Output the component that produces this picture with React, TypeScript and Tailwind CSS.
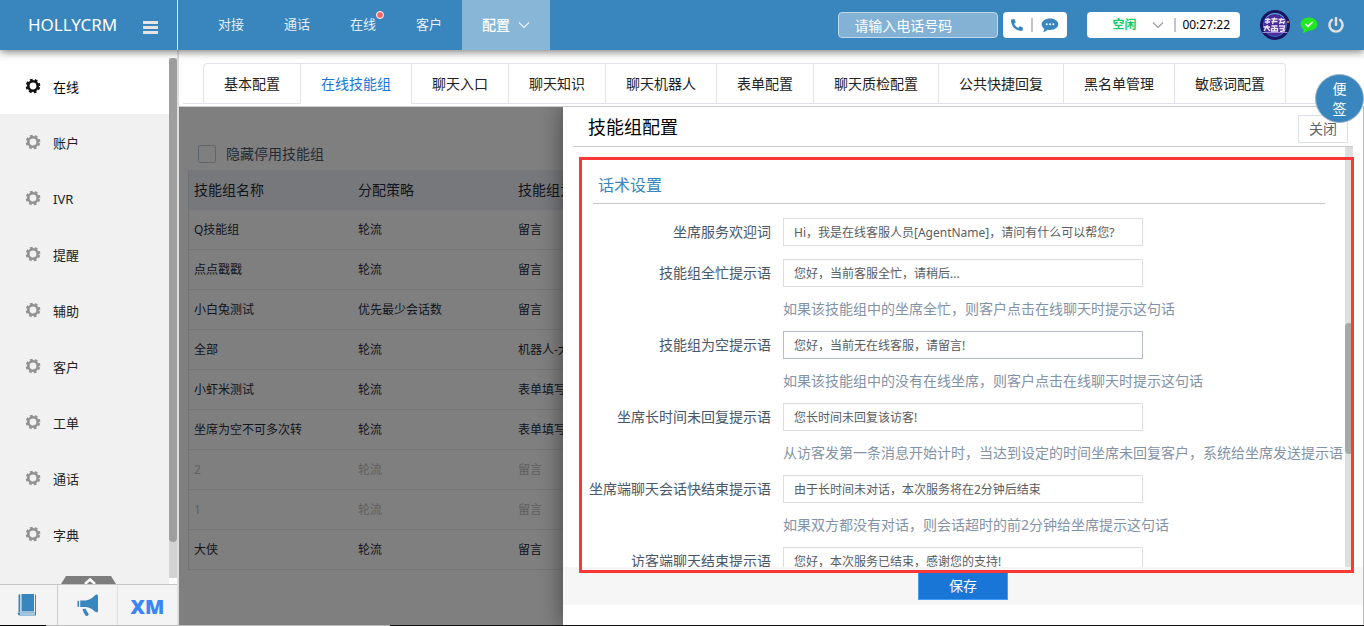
import clsx from "clsx";
import { FaPhone, FaPowerOff } from "react-icons/fa";

const navItems = [
  { name: "对接" },
  { name: "通话" },
  { name: "在线", dot: true },
  { name: "客户" },
];

const menuItems = [
  "在线",
  "账户",
  "IVR",
  "提醒",
  "辅助",
  "客户",
  "工单",
  "通话",
  "字典",
];

const tabs = [
  "基本配置",
  "在线技能组",
  "聊天入口",
  "聊天知识",
  "聊天机器人",
  "表单配置",
  "聊天质检配置",
  "公共快捷回复",
  "黑名单管理",
  "敏感词配置",
];

const groups = [
  { name: "Q技能组", strategy: "轮流", empty: "留言" },
  { name: "点点戳戳", strategy: "轮流", empty: "留言" },
  { name: "小白兔测试", strategy: "优先最少会话数", empty: "留言" },
  { name: "全部", strategy: "轮流", empty: "机器人-大白" },
  { name: "小虾米测试", strategy: "轮流", empty: "表单填写" },
  { name: "坐席为空不可多次转", strategy: "轮流", empty: "表单填写" },
  { name: "2", strategy: "轮流", empty: "留言", disabled: true },
  { name: "1", strategy: "轮流", empty: "留言", disabled: true },
  { name: "大侠", strategy: "轮流", empty: "留言" },
];

const fields = [
  {
    id: "welcome",
    label: "坐席服务欢迎词",
    value: "Hi，我是在线客服人员[AgentName]，请问有什么可以帮您?",
  },
  {
    id: "busy",
    label: "技能组全忙提示语",
    value: "您好，当前客服全忙，请稍后...",
    hint: "如果该技能组中的坐席全忙，则客户点击在线聊天时提示这句话",
  },
  {
    id: "empty",
    label: "技能组为空提示语",
    value: "您好，当前无在线客服，请留言!",
    hint: "如果该技能组中的没有在线坐席，则客户点击在线聊天时提示这句话",
    hovered: true,
  },
  {
    id: "noreply",
    label: "坐席长时间未回复提示语",
    value: "您长时间未回复该访客!",
    hint: "从访客发第一条消息开始计时，当达到设定的时间坐席未回复客户，系统给坐席发送提示语",
  },
  {
    id: "ending",
    label: "坐席端聊天会话快结束提示语",
    value: "由于长时间未对话，本次服务将在2分钟后结束",
    hint: "如果双方都没有对话，则会话超时的前2分钟给坐席提示这句话",
  },
  {
    id: "ended",
    label: "访客端聊天结束提示语",
    value: "您好，本次服务已结束，感谢您的支持!",
  },
];

const GearIcon = ({ className }: { className?: string }) => (
  <svg viewBox="-8 -8 16 16" className={className} fill="none" stroke="currentColor">
    <circle r="4.700" strokeWidth="2.600" />
    <circle r="6.300" strokeWidth="2" strokeDasharray="2.7 2.248" strokeDashoffset="-1.124" />
  </svg>
);

const ChevronIcon = ({ className }: { className?: string }) => (
  <svg viewBox="0 0 12 12" className={className} fill="none" stroke="currentColor" strokeWidth="1.100">
    <path d="M1 3.500l5 5 5-5" />
  </svg>
);

const BookIcon = () => (
  <svg viewBox="0 0 20 22" className="w-5 h-[22px]" fill="#3886bd">
    <path d="M4.500 0H17v17.500H4.500z" />
    <path d="M1.500 0.500H3.300v17.500H1.500z" />
    <path d="M18 0.500h1v21H3C1 21.500 0.500 20 0.800 18.600H18z" />
    <path d="M3 19.400h15v1.200H3z" fill="#f4f4f4" />
  </svg>
);

const MegaphoneIcon = () => (
  <svg viewBox="0 0 22 24" className="w-[22px] h-6" fill="#3886bd">
    <path d="M0.500 7.800h1.600v6H0.500z" />
    <path d="M3.200 7.400H9c3.500-.6 6.500-2.300 8.800-5C19 1 21 1.200 21 3v15c0 1.600-2 1.500-3.200.4C15.500 16 12.500 14.500 9 14H3.200z" />
    <path d="M5.500 16l3.200-.3c.6 2 1.700 3.300 2.800 5 .8 1.600-1.600 3.200-2.900 1.700-1.600-2-2.600-4-3.100-6.400z" />
  </svg>
);

const ChatIcon = () => (
  <svg viewBox="0 0 18 15" className="w-[18px] h-[15px]">
    <path
      d="M9 0.500c4.700 0 8.300 2.500 8.300 5.800S13.700 12 9 12c-.8 0-1.600 0-2.300-.2C5.500 13 4 13.800 1.900 13.900c1-.9 1.400-1.900 1.300-3.200C1.600 9.600.7 8 .7 6.300.7 3 4.300.5 9 .5z"
      fill="#3886bd"
    />
    <g fill="#fff">
      <circle cx="5.700" cy="6.200" r="1" />
      <circle cx="9" cy="6.200" r="1" />
      <circle cx="12.300" cy="6.200" r="1" />
    </g>
  </svg>
);

const CheckBubbleIcon = () => (
  <svg viewBox="0 0 18 17" className="w-[18px] h-[17px]">
    <path
      d="M9 0.500c4.800 0 8.500 2.900 8.500 6.600 0 3.800-3.700 6.700-8.500 6.700l-1.500-.1c-1.300 1.300-2.900 2.100-4.900 2.300.8-1 1.100-2.100.9-3.500C1.600 11.200.5 9.300.5 7.100.5 3.400 4.200.5 9 .5z"
      fill="#21e821"
    />
    <path d="M5.500 7l2.500 2.400L12.600 5" fill="none" stroke="#fff" strokeWidth="1.500" />
  </svg>
);

const Avatar = () => (
  <svg viewBox="0 0 30 30" className="size-[30px]">
    <circle cx="15" cy="15" r="15" fill="#1b1460" />
    <circle cx="15" cy="15" r="11.500" fill="#4a2c9c" stroke="#3c6fc4" />
    <path d="M6.500 7a12 12 0 0117 0" fill="none" stroke="#56a9d8" />
    <g stroke="#efe6fa" strokeWidth="1.300" fill="none">
      <path d="M5 9.500h5.500M8 8l-1 6M5 12h5M11.500 9h6M11.500 11.500h6M14.500 7.500l-2 6.500M18.500 9.500h6M21.500 8l-2 6M19.500 12.500h5M24.500 11l-1 3" />
      <path d="M3.500 17h6.500M7.500 15l-3.500 6M7 17.500l3 3.500M11.500 16h6M11.500 18.500h6v2.500h-6zM14.500 16v5M19 16h5.500l-1 5M19.500 18.500h4M20 21.500l5-1" />
    </g>
    <path d="M2.500 22.500h25" stroke="#a48ad6" />
    <circle cx="28" cy="12" r="1" fill="#ef8354" />
  </svg>
);

const Header = () => (
  <header className="relative z-20 flex h-[50px] shrink-0 items-center bg-[#3886bd] text-white shadow-[0_2px_8px_rgba(0,0,0,0.5)]">
    <div className="flex h-full w-[178px] shrink-0 items-center justify-between border-r border-[#dce9f3] pl-7 pr-[19px]">
      <span className="text-[17px]">HOLLYCRM</span>
      <button type="button" aria-label="菜单" className="mt-1 flex w-[15px] flex-col gap-[2px]">
        <span className="h-[3px] bg-[#e4e4e4]" />
        <span className="h-[3px] bg-[#e4e4e4]" />
        <span className="h-[3px] bg-[#e4e4e4]" />
      </button>
    </div>

    <nav className="ml-5 flex h-full text-[13px] text-[#e8eff5]">
      {navItems.map((item) => (
        <a key={item.name} href="#" className="flex items-center px-5">
          <span className="relative">
            {item.name}
            {item.dot && (
              <span className="absolute -right-2 -top-1 size-2 rounded-full border border-white bg-[#ff6060]" />
            )}
          </span>
        </a>
      ))}
      <button type="button" className="flex items-center gap-2 bg-[#88b6d7] px-5 text-sm font-medium text-white">
        配置
        <ChevronIcon className="size-3 text-[#eef4f9]" />
      </button>
    </nav>

    <div className="ml-auto flex items-center pr-5">
      <input
        type="tel"
        aria-label="电话号码"
        placeholder="请输入电话号码"
        className="h-[26px] w-40 rounded border border-[#c0d8ea] bg-[#84b2d4] px-[15px] text-sm text-white outline-none placeholder:text-white"
      />
      <div className="ml-[5px] flex h-[26px] w-16 items-center justify-center gap-2 rounded bg-white text-[#3886bd]">
        <button type="button" aria-label="拨号">
          <FaPhone className="size-3 -scale-x-100" />
        </button>
        <span className="h-3.5 w-[2px] bg-[#c4c4c4]" />
        <button type="button" aria-label="消息">
          <ChatIcon />
        </button>
      </div>
      <div className="ml-5 flex h-[26px] items-center rounded bg-white pl-[25px] pr-2.5">
        <div className="relative flex items-center">
          <select
            aria-label="坐席状态"
            className="w-14 appearance-none bg-transparent text-xs font-bold text-[#13ce66] outline-none"
          >
            <option>空闲</option>
          </select>
          <ChevronIcon className="pointer-events-none absolute right-1 size-3 text-[#999]" />
        </div>
        <span className="ml-1.5 h-3.5 w-[2px] bg-[#c4c4c4]" />
        <span className="ml-1.5 text-xs text-black">00:27:22</span>
      </div>
      <div className="ml-5 flex items-center gap-2.5">
        <Avatar />
        <CheckBubbleIcon />
        <button type="button" aria-label="退出">
          <FaPowerOff className="size-4 text-[#e0e0e0]" />
        </button>
      </div>
    </div>
  </header>
);

const Sidebar = () => (
  <aside className="flex w-[179px] shrink-0 flex-col border-r-2 border-[#dedede] bg-[#f1f1f1]">
    <div className="flex min-h-0 flex-1 bg-white pt-2">
      <nav className="flex-1 overflow-hidden bg-[#f1f1f1]">
        {menuItems.map((name, i) => (
          <a
            key={name}
            href="#"
            className={clsx(
              "flex h-14 items-center gap-3 pl-[25px] text-[13px]",
              i === 0 ? "bg-white text-black" : "text-[#222]"
            )}
          >
            <GearIcon className={clsx("size-4", i === 0 ? "text-[#111]" : "text-[#929292]")} />
            <span className="pt-1">{name}</span>
          </a>
        ))}
      </nav>
      <div className="mb-1.5 w-2 bg-[#d2d2d2]">
        <div className="h-[93%] rounded bg-[#9e9e9e]" />
      </div>
    </div>
    <div className="relative flex h-[41px] shrink-0 border-t border-[#c6c6c6] bg-[#f4f4f4]">
      <svg viewBox="0 0 55 8" className="absolute -top-[9px] left-[61px] h-2 w-[55px]">
        <path d="M5 0h45l5 8H0z" fill="#7d7d7d" />
        <path d="M24 8l5-4.500L34 8" fill="none" stroke="#fff" strokeWidth="2.500" />
      </svg>
      <a href="#" aria-label="知识库" className="flex w-[58px] items-center justify-center border-r border-[#ccc] pr-1">
        <BookIcon />
      </a>
      <a href="#" aria-label="公告" className="flex w-[60px] items-center justify-center border-r border-[#e0e0e0]">
        <MegaphoneIcon />
      </a>
      <a
        href="#"
        className="flex flex-1 items-center justify-center pt-1 font-['Open_Sans'] text-xl font-extrabold text-[#3b86f7]"
      >
        XM
      </a>
    </div>
  </aside>
);

const Tabs = () => (
  <div className="shrink-0 border-b border-[#ccc] bg-white pb-[2px] pl-1 pt-[13px]">
    <div className="flex h-[41px] text-sm text-[#222]">
      <div className="w-5 border-b border-[#e2e2ea]" />
      {tabs.map((tab, i) => (
        <button
          key={tab}
          type="button"
          className={clsx(
            "shrink-0 border-r border-t border-[#e2e2ea] px-5",
            i === 0 && "rounded-tl border-l",
            i === tabs.length - 1 && "rounded-tr",
            i === 1 ? "text-[#1a76d6]" : "border-b"
          )}
        >
          {tab}
        </button>
      ))}
      <div className="flex-1 border-b border-[#e2e2ea]" />
    </div>
  </div>
);

const GroupTable = () => (
  <div className="relative h-full bg-white pl-[9px] pt-[38px]">
    <label className="flex h-[18px] items-center gap-2.5 pl-2.5 text-sm text-[#48576a]">
      <input type="checkbox" className="size-[18px] appearance-none rounded-xs border border-[#bfcbd9]" />
      隐藏停用技能组
    </label>
    <table className="mt-[7px] w-full table-fixed border-separate border-spacing-0 border-l border-[#dfe6ec] text-left text-xs text-[#1f2d3d]">
      <thead>
        <tr className="h-10 bg-[#eef1f6] text-sm">
          <th className="w-[164px] px-[5px] font-normal">技能组名称</th>
          <th className="w-40 px-[5px] font-normal">分配策略</th>
          <th className="px-[5px] font-normal">技能组为空</th>
        </tr>
      </thead>
      <tbody>
        {groups.map((group) => (
          <tr key={group.name} className={clsx("h-10", group.disabled && "text-[#c0c0c0]")}>
            <td className="border-b border-[#e6eaf0] px-[5px]">{group.name}</td>
            <td className="border-b border-[#e6eaf0] px-[5px]">{group.strategy}</td>
            <td className="border-b border-[#e6eaf0] px-[5px]">{group.empty}</td>
          </tr>
        ))}
      </tbody>
    </table>
    <div className="absolute inset-0 bg-black/50" />
  </div>
);

const ConfigDrawer = () => (
  <section className="absolute inset-y-0 right-0 flex w-[801px] max-w-full flex-col border-r border-[#bbb] bg-white shadow-[-2px_0_20px_rgba(0,0,0,0.4)]">
    <div className="mx-2.5 flex h-10 shrink-0 items-center justify-between border-b border-[#c8c8c8] pl-[15px] pr-[5px]">
      <h2 className="text-lg text-black">技能组配置</h2>
      <button type="button" className="mt-1 h-7 border border-[#dcdfe6] px-2.5 text-sm text-[#606266]">
        关闭
      </button>
    </div>

    <div className="mr-2.5 flex min-h-0 flex-1">
      <form className="min-w-0 flex-1 overflow-hidden pt-[26px]">
        <h3 className="ml-[30px] mr-5 border-b border-[#c8c8c8] pb-1.5 pl-[5px] text-base text-[#3886bd]">
          话术设置
        </h3>
        <div className="mt-3.5">
          {fields.map((field) => (
            <div key={field.id} className={clsx(!field.hint && "mb-[13px]")}>
              <div className="flex items-center gap-3">
                <label htmlFor={field.id} className="w-52 shrink-0 text-right text-sm text-[#48576a]">
                  {field.label}
                </label>
                <input
                  id={field.id}
                  type="text"
                  defaultValue={field.value}
                  className={clsx(
                    "h-7 w-[360px] border px-2.5 text-xs text-[#5a5c60] outline-none",
                    field.hovered ? "border-[#b8bcc8]" : "border-[#dcdce6]"
                  )}
                />
              </div>
              {field.hint && (
                <p className="whitespace-nowrap py-3 pl-[220px] text-sm text-[#8492a6]">{field.hint}</p>
              )}
            </div>
          ))}
        </div>
      </form>
      <div className="flex w-2 flex-col bg-[#dedede]">
        <div className="h-[42%]" />
        <div className="h-[31%] rounded bg-[#a8a8a8]" />
      </div>
    </div>

    <div className="mb-5 flex h-[38px] shrink-0 items-center justify-center bg-[#f6f6f6]">
      <button type="button" className="h-7 w-[90px] border border-[#409eff] bg-[#1a76d6] text-sm text-white">
        保存
      </button>
    </div>

    <div className="pointer-events-none absolute bottom-[52px] left-4 right-[9px] top-[50px] border-3 border-[#fb3838]" />
  </section>
);

const App = () => {
  return (
    <div className="relative flex h-screen flex-col overflow-hidden bg-white font-['Noto_Sans','Noto_Sans_CJK_SC',sans-serif]">
      <Header />
      <div className="flex min-h-0 flex-1">
        <Sidebar />
        <main className="flex min-w-0 flex-1 flex-col">
          <Tabs />
          <div className="relative min-h-0 flex-1 overflow-hidden">
            <GroupTable />
            <ConfigDrawer />
          </div>
        </main>
      </div>
      <div className="h-px shrink-0 bg-[linear-gradient(to_right,#000_46px,#bbb_46px,#bbb_390px,#111_390px)]" />

      <button
        type="button"
        className="absolute right-0 top-[74px] z-10 size-[49px] rounded-full border border-[#9fb4c4] bg-[#3886bd] px-4 text-sm text-white"
      >
        便签
      </button>
    </div>
  );
};

export default App;
